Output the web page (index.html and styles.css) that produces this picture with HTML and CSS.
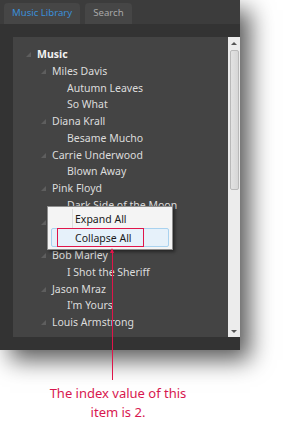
FILE: index.html
```html
<!DOCTYPE html>
<html lang="en">
<head>
  <meta charset="UTF-8">
  <title>Music Library - Context Menu</title>
  <link rel="stylesheet" href="styles.css">
</head>
<body>

<div class="window">
  <div class="tabs">
    <div class="tab active">Music Library</div>
    <div class="tab">Search</div>
  </div>

  <div class="body">
    <div class="panel">
      <div class="tree">
        <div class="row lvl0 bold"><span class="arrow"></span>Music</div>
        <div class="row lvl1"><span class="arrow"></span>Miles Davis</div>
        <div class="row lvl2">Autumn Leaves</div>
        <div class="row lvl2">So What</div>
        <div class="row lvl1"><span class="arrow"></span>Diana Krall</div>
        <div class="row lvl2">Besame Mucho</div>
        <div class="row lvl1"><span class="arrow"></span>Carrie Underwood</div>
        <div class="row lvl2">Blown Away</div>
        <div class="row lvl1"><span class="arrow"></span>Pink Floyd</div>
        <div class="row lvl2">Dark Side of the Moon</div>
        <!-- rows hidden under the menu -->
        <div class="row lvl1"><span class="arrow"></span></div>
        <div class="row lvl2"></div>
        <div class="row lvl1"><span class="arrow"></span>Bob Marley</div>
        <div class="row lvl2">I Shot the Sheriff</div>
        <div class="row lvl1"><span class="arrow"></span>Jason Mraz</div>
        <div class="row lvl2">I'm Yours</div>
        <div class="row lvl1"><span class="arrow"></span>Louis Armstrong</div>
      </div>
      <div class="scrollbar">
        <div class="sb-btn up"></div>
        <div class="sb-track"><div class="sb-thumb"></div></div>
        <div class="sb-btn down"></div>
      </div>
    </div>
  </div>

  <!-- context menu opened on the tree -->
  <div class="menu">
    <div class="menu-item">Expand All</div>
    <div class="menu-item hover">Collapse All</div>
  </div>
</div>

<!-- annotation -->
<div class="callout-box"></div>
<div class="callout-line"></div>
<div class="callout-head"></div>
<p class="caption">The index value of this<br>item is 2.</p>

</body>
</html>
```

FILE: styles.css
```css
body {
  margin: 0;
  width: 300px;
  height: 429px;
  background: #fff;
  font-family: 'Noto Sans', sans-serif;
  position: relative;
  overflow: hidden;
}
.window {
  position: relative;
  width: 240px;
  height: 350px;
  background: #333;
  box-shadow: 10px 10px 22px rgba(0,0,0,0.65);
}
.tabs {
  height: 24px;
  box-sizing: border-box;
  padding: 3px 0 0 4px;
  background: #3c3c3c;
  display: flex;
  align-items: flex-end;
  gap: 5px;
}
.tab {
  height: 21px;
  line-height: 20px;
  padding: 0 8px;
  background: #464646;
  border-radius: 4px 4px 0 0;
  font-size: 9.6px;
  color: #a8a8a8;
}
.tab.active {
  color: #3b8fd9;
}
.body {
  padding: 13px 0 13px 13px;
}
.panel {
  height: 300px;
  display: flex;
  background: #444;
}
.tree {
  flex: 1;
  overflow: hidden;
  padding-top: 9px;
}
.row {
  height: 16.75px;
  line-height: 16.75px;
  font-size: 10.5px;
  color: #dcdcdc;
  white-space: nowrap;
  position: relative;
}
.row.bold {
  font-weight: bold;
  color: #f2f2f2;
}
.lvl0 { padding-left: 24px; }
.lvl1 { padding-left: 39px; }
.lvl2 { padding-left: 54px; }
.arrow {
  position: absolute;
  width: 0;
  height: 0;
  top: 6px;
  margin-left: -11px;
  border-left: 5px solid transparent;
  border-bottom: 5px solid #5e5e5e;
}
.scrollbar {
  width: 12px;
  background: #ececec;
  display: flex;
  flex-direction: column;
  align-items: center;
}
.sb-btn {
  height: 12px;
  width: 12px;
  display: flex;
  align-items: center;
  justify-content: center;
}
.sb-btn::after {
  content: '';
  border-left: 3px solid transparent;
  border-right: 3px solid transparent;
}
.sb-btn.up::after { border-bottom: 3px solid #555; }
.sb-btn.down::after { border-top: 3px solid #555; }
.sb-track {
  flex: 1;
  width: 12px;
}
.sb-thumb {
  margin: 1px 1px 0 2px;
  height: 140px;
  background: linear-gradient(to right, #e2e2e2, #d6d6d6);
  border: 1px solid #b9b9b9;
  border-radius: 2px;
  box-sizing: border-box;
}
.menu {
  position: absolute;
  left: 47px;
  top: 206px;
  width: 126px;
  box-sizing: border-box;
  padding: 2px 3px;
  background: #f4f4f4;
  border: 1px solid #8e8e8e;
  box-shadow: 2px 2px 3px rgba(0,0,0,0.45);
}
.menu::before {
  content: '';
  position: absolute;
  left: 24px;
  top: 2px;
  bottom: 2px;
  width: 1px;
  background: #dcdcdc;
}
.menu-item {
  position: relative;
  height: 19px;
  line-height: 19px;
  padding-left: 23px;
  font-size: 10.5px;
  color: #1a1a1a;
  border: 1px solid transparent;
  border-radius: 2px;
  box-sizing: border-box;
}
.menu-item.hover {
  background: #e6f1fa;
  border-color: #a9d2ef;
}
.callout-box {
  position: absolute;
  left: 57px;
  top: 228px;
  width: 85px;
  height: 17px;
  border: 1px solid #e0154a;
}
.callout-line {
  position: absolute;
  left: 112px;
  top: 250px;
  width: 1px;
  height: 130px;
  background: #e0154a;
}
.callout-head {
  position: absolute;
  left: 110px;
  top: 248px;
  border-left: 2.5px solid transparent;
  border-right: 2.5px solid transparent;
  border-bottom: 5px solid #e0154a;
}
.caption {
  margin: 34px 0 0 0;
  width: 236px;
  text-align: center;
  font-size: 13px;
  line-height: 19px;
  color: #d8174f;
}
```
